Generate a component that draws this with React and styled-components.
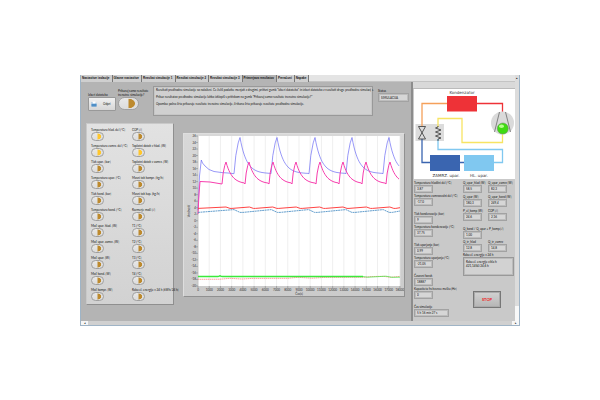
import React, { useState } from 'react'
import styled, { createGlobalStyle } from 'styled-components'

const GlobalStyle = createGlobalStyle`
* { box-sizing: border-box; }
body {
  margin: 0;
  background: #fff;
  font-family: Lato, "Liberation Sans", Arial, sans-serif;
  font-size: 3px;
  line-height: 4px;
  color: #111;
}
button, input { font: inherit; color: inherit; margin: 0; }
`

const Page = styled.div`
  padding: 75px 80px 0;
`

const Window = styled.main`
  display: grid;
  grid-template-columns: minmax(0, 1fr) 4px;
  border: 1px solid #9fb4c6;
  border-top: none;
  background: #b4b4b4;
`

const Tabs = styled.nav`
  display: flex;
  height: 7px;
  background: #e4e4e4;
  border-bottom: 1px solid #c4c4c4;
`

const Tab = styled.button`
  height: 7px;
  padding: 0 2px 0 1px;
  border: none;
  border-right: 1px solid #777;
  background: ${p => (p.$active ? '#b4b4b4' : '#cfcfcf')};
  font-family: "Liberation Sans", Arial, sans-serif;
  font-weight: bold;
  line-height: 7px;
  white-space: nowrap;
`

const Body = styled.div`
  display: grid;
  grid-template-columns: minmax(0, 1fr) 104px;
`

const Workspace = styled.section`
  padding: 4px 2px 16px 5px;
`

const TopBar = styled.div`
  display: flex;
  height: 37px;
  padding-left: 2px;
`

const FileBox = styled.div`
  display: flex;
  flex-direction: column;
  flex: none;
  width: 30px;
  padding-top: 7px;
`

const FileButton = styled.button`
  display: flex;
  align-items: center;
  gap: 6px;
  width: 28px;
  height: 14px;
  padding: 0 2px;
  border: 1px solid #999;
  border-radius: 1px;
  background: linear-gradient(#f0f0f0, #d6d6d6);
`

const CompareBox = styled.div`
  display: flex;
  flex-direction: column;
  flex: none;
  width: 35px;
  padding-top: 3px;
  white-space: nowrap;
`

const Switch = styled.input`
  appearance: none;
  display: block;
  flex: none;
  width: ${p => (p.$big ? 21 : 13)}px;
  height: ${p => (p.$big ? 13 : 9)}px;
  --lamp: #bd8a2e;
  border: 1px solid #a0a0a0;
  border-radius: 8px;
  background:
    linear-gradient(#e8e8e8, #dcdcdc) 0 0 / 50% 100% no-repeat,
    radial-gradient(ellipse 36% 46% at 50% 50%, var(--lamp) 88%, #dedede 100%);
  &:checked { --lamp: #ffc62c; }
`

const Message = styled.div`
  flex: 1;
  min-width: 0;
  height: 30px;
  padding: 1px 2px;
  border: 1px solid #999;
  outline: 1px solid #c6c6c6;
  outline-offset: -2px;
  background: #d0d0d0;
  white-space: nowrap;
  p { margin: 0 0 3px; }
`

const Status = styled.div`
  display: flex;
  flex-direction: column;
  flex: none;
  width: 31px;
  margin: 3px 0 0 5px;
`

const Panels = styled.div`
  display: flex;
  align-items: flex-start;
  gap: 9px;
  padding-right: 4px;
`

const SwitchPanel = styled.div`
  display: grid;
  grid-template-columns: 41px minmax(0, 1fr);
  row-gap: 4px;
  flex: none;
  width: 88px;
  padding: 4px 0 4px 4px;
  border: 1px solid #c9c9c9;
  border-right-color: #8f8f8f;
  border-bottom-color: #8f8f8f;
  background: linear-gradient(#e2e2e2, #d2d2d2);
  white-space: nowrap;
`

const SwitchItem = styled.div`
  display: flex;
  flex-direction: column;
  height: 12px;
`

const ChartPanel = styled.div`
  flex: 1;
  min-width: 0;
  margin-top: 10px;
  border: 1px solid #dedede;
  border-right-color: #909090;
  border-bottom-color: #909090;
  background: linear-gradient(#d8d8d8, #cbcbcb);
  svg { display: block; width: 100%; }
`

const Side = styled.aside`
  border-left: 2px solid #8c8c8c;
  background: #c9c9c9;
`

const SideHead = styled.div`
  height: 7px;
  background: #d9d9d9;
  border-bottom: 1px solid #bbb;
`

const Diagram = styled.div`
  margin-left: 1px;
  background: #fff;
  svg { display: block; width: 100%; }
`

const Readings = styled.div`
  display: grid;
  grid-template-columns: 49px minmax(0, 1fr);
  padding: 2px 0 0 1px;
  white-space: nowrap;
`

const Column = styled.div`
  display: flex;
  flex-direction: column;
  gap: 6px;
`

const Group = styled.div`
  display: flex;
  flex-direction: column;
  gap: ${p => p.$gap || 1}px;
`

const Pair = styled.div`
  display: grid;
  grid-template-columns: 25px minmax(0, 1fr);
`

const FieldBox = styled.div`
  display: flex;
  flex-direction: column;
  height: 12px;
`

const Value = styled.input`
  width: ${p => p.$width || '19px'};
  height: ${p => (p.$tall ? 9 : 8)}px;
  padding: 0 2px;
  border: 1px solid #a2a2a2;
  outline: 1px solid #bdbdbd;
  outline-offset: -2px;
  background: #d6d6d6;
`

const EnergyBox = styled.div`
  width: 51px;
  height: 19px;
  padding: 2px;
  border: 1px solid #999;
  outline: 1px solid #bbb;
  outline-offset: -2px;
  background: #d2d2d2;
  p { margin: 0; line-height: 4px; }
`

const StopButton = styled.button`
  width: 28px;
  height: 17px;
  margin: 9px 0 0 10px;
  padding: 0;
  border: 1px solid #777;
  box-shadow: inset 0 0 0 1px #aaa;
  background: linear-gradient(#d2d2d2, #b5b5b5);
  color: #f01818;
  font-size: 4px;
  font-weight: bold;
`

const VScroll = styled.div`
  display: flex;
  flex-direction: column;
  justify-content: space-between;
  background: #dcdcdc;
  line-height: 6px;
  text-align: center;
  span:last-child { height: 15px; background: #f8f8f8; }
`

const HScroll = styled.div`
  grid-column: 1 / -1;
  display: flex;
  justify-content: space-between;
  height: 4px;
  background: #d0d0d0;
  span { width: 7px; background: #f6f6f6; text-align: center; }
`

const tabs = ['Nastavitve izolacije', 'Glavne nastavitve', 'Rezultat simulacije 1', 'Rezultat simulacije 2', 'Rezultat simulacije 3', 'Primerjava rezultatov', 'Preračuni', 'Napake']

const switches = [
  ['Temperatura hlad. del [°C]', true], ['COP [/]', false],
  ['Temperatura zamrz. del [°C]', true], ['Toplotni dotok v hlad. [W]', true],
  ['Tlak upar. [bar]', false], ['Toplotni dotok v zamrz. [W]', false],
  ['Temperatura upar. [°C]', false], ['Masni tok kompr. [kg/h]', false],
  ['Tlak kond. [bar]', false], ['Masni tok kap. [kg/h]', false],
  ['Temperatura kond. [°C]', false], ['Razmerje moči [/]', false],
  ['Moč upar. hlad. [W]', false], ['T1 [°C]', false],
  ['Moč upar. zamrz. [W]', false], ['T2 [°C]', false],
  ['Moč upar. [W]', false], ['T3 [°C]', false],
  ['Moč kond. [W]', false], ['T4 [°C]', false],
  ['Moč kompr. [W]', false], ['Raba el. energije v 24 h [kWh/24 h]', false],
]

function Field({ id, label, value, width }) {
  return (
    <FieldBox>
      <label htmlFor={id}>{label}</label>
      <Value id={id} $width={width} value={value} readOnly />
    </FieldBox>
  )
}

// fast rise to a peak, then exponential decay down to the base level
function spikes(start, peaks, rise, top, base, tau) {
  let points = [...start]
  peaks.forEach((p, i) => {
    points.push([p - rise, base], [p - rise * 0.7, base - (base - top) * 0.5], [p - rise * 0.3, base - (base - top) * 0.85], [p, top])
    const end = i < peaks.length - 1 ? peaks[i + 1] - rise : 202
    for (let x = p + 1; x < end; x += 1) {
      points.push([x, base - (base - top) * Math.exp(-(x - p) / tau)])
    }
  })
  return points.map(p => p[0].toFixed(1) + ',' + p[1].toFixed(1)).join(' ')
}

function waves(first, period, low, high, drop) {
  let points = [[0, low]]
  for (let x = first; x < 206; x += period) {
    points.push([x - drop, high], [x, low], [x + drop / 2, low])
  }
  return points.filter(p => p[0] <= 202).map(p => p.join(',')).join(' ') + ' 202,' + (low + high) / 2
}

const bluePeaks = [42, 79, 117, 154, 191]
const pinkPeaks = [28, 51, 75, 98, 122, 145, 168, 192]
const blueStart = [[0, 74], [1.5, 40], [3.3, 24], [4.5, 27], [7, 30], [11, 33.5], [16, 35.5], [24, 36.6], [30, 37]]
const pinkStart = [[0, 78], [1, 58], [2, 45.5], [12, 46]]

function Chart() {
  const ys = Array.from({ length: 24 }, (_, i) => 26 - i * 2)
  const xs = Array.from({ length: 19 }, (_, i) => i * 1000)
  return (
    <svg viewBox="0 0 220 162" fontSize="3" fill="#333">
      <g transform="translate(14 2)">
        <rect width="202" height="150" fill="#fff" />
        {xs.map((v, i) => (
          <g key={v}>
            <line x1={i * 11.22} x2={i * 11.22} y1="0" y2="150" stroke="#e8e8e8" strokeWidth="0.7" />
            <line x1={i * 11.22} x2={i * 11.22} y1="150" y2="152" stroke="#666" strokeWidth="0.4" />
            <text x={i * 11.22} y="155" textAnchor="middle">{v}</text>
          </g>
        ))}
        {ys.map((v, i) => (
          <g key={v}>
            <line x1="-2" x2="0" y1={i * 6.52} y2={i * 6.52} stroke="#666" strokeWidth="0.4" />
            <text x="-2" y={i * 6.52 + 1} textAnchor="end">{v}</text>
          </g>
        ))}
        <line x1="0" x2="0" y1="0" y2="150" stroke="#888" strokeWidth="0.4" />
        <g fill="none" strokeWidth="0.7">
          <polyline stroke="#6c6cf4" points={spikes(blueStart, bluePeaks, 6, 1.5, 37.7, 6.5)} />
          <polyline stroke="#f73fae" strokeWidth="1" points={spikes(pinkStart, pinkPeaks, 4, 26, 48, 6)} />
          <polyline stroke="#f44" strokeWidth="1" points={waves(32, 23.4, 72.4, 71, 4)} />
          <polyline stroke="#3d86c0" strokeWidth="0.8" strokeDasharray="2 0.5" points={waves(42, 37.3, 76.4, 73.6, 6)} />
          <polyline stroke="#f77" strokeWidth="0.7" strokeDasharray="1.5 0.5" points="0,143.3 22,143.2 32,142.3 44,143 54,142.4 90,142.3 100,141.3 114,142.2 126,141.4 168,141.2 172,140.6 186,140.3 192,141.3 202,140.4" />
          <polyline stroke="#3bea3b" strokeWidth="1.3" points="0,140.5 20,140.5 22,139.8 24,140.5 165,140.5" />
          <polyline stroke="#3bea3b" strokeWidth="0.7" points="165,140.6 170,141.2 188,140.2 194,141.3 202,141.2" />
        </g>
        <text x="101" y="158.5" textAnchor="middle">Čas(s)</text>
        <text transform="translate(-8 75) rotate(-90)" textAnchor="middle">Vrednosti</text>
      </g>
    </svg>
  )
}

function Circuit() {
  return (
    <svg viewBox="0 0 101 90" fontFamily="DejaVu Sans, sans-serif" fontSize="4" fill="#333">
      <rect x="1.5" y="35" width="28.5" height="17" fill="#dcdcdc" />
      <g fill="none" strokeWidth="1.3">
        <path d="M33 14.5H8V37" stroke="#f5a05a" />
        <path d="M63 14.5H88.500V24" stroke="#ee3237" />
        <path d="M24 38V29.500H48V53.500H88.500V44" stroke="#f7e463" />
        <path d="M24 50V60.500H88.500V73.500H80" stroke="#80c8f0" />
        <path d="M8 50V73.500H17M46 73.500H50" stroke="#3a65b0" />
      </g>
      <rect x="33" y="7" width="30" height="15.5" fill="#ee3237" />
      <rect x="16" y="66" width="30" height="16" fill="#3a65b0" />
      <rect x="50" y="66" width="30" height="16" fill="#80c8f0" />
      <g fill="none" stroke="#333" strokeWidth="0.8">
        <path d="M4.500 37.500H11.500L4.500 50H11.500Z" />
        <path d="M24 37v1l-2.500 1 5.500 2-5.500 2 5.500 2-5.500 2 5.500 2-3 1v2" />
      </g>
      <circle cx="88.5" cy="34" r="11.5" fill="#dadada" />
      <path d="M85.500 23L80.500 43M91.500 23L96.500 43" stroke="#444" strokeWidth="0.6" />
      <circle cx="88.8" cy="39.500" r="5.500" fill="#3edb12" stroke="#6b8a60" strokeWidth="0.5" />
      <ellipse cx="87.500" cy="37.200" rx="2.500" ry="1.700" fill="#b4ff8c" />
      <text x="48" y="5" textAnchor="middle">Kondenzator</text>
      <text x="32" y="87.500" textAnchor="middle">ZAMRZ. upar.</text>
      <text x="65" y="87.500" textAnchor="middle">HL. upar.</text>
    </svg>
  )
}

function App() {
  const [active, setActive] = useState(5)

  return (
    <>
      <GlobalStyle />
      <Page>
        <Window>
          <div>
            <Tabs>
              {tabs.map((t, i) => (
                <Tab key={t} $active={i === active} onClick={() => setActive(i)}>{t}</Tab>
              ))}
            </Tabs>
            <Body>
              <Workspace>
                <TopBar>
                  <FileBox>
                    <label htmlFor="file">Izberi datoteko</label>
                    <FileButton id="file">
                      <svg width="6" height="6" viewBox="0 0 6 6">
                        <path d="M0.500 1h2l0.600 0.800h2.400v3.700h-5z" fill="#8db9df" />
                        <path d="M1.500 0.500h3v2h-3z" fill="#fff" />
                        <path d="M0.500 3h5v2.500h-5z" fill="#4f8fc6" />
                      </svg>
                      Odpri
                    </FileButton>
                  </FileBox>
                  <CompareBox>
                    <label htmlFor="compare">Prikazuj samo rezultate<br />trenutne simulacije?</label>
                    <Switch id="compare" type="checkbox" $big />
                  </CompareBox>
                  <Message>
                    <p>Rezultati predhodne simulacije so naloženi. Če želiš podatke menjati z drugimi, pritisni gumb "Izberi datoteko" in izberi datoteko z rezultati druge predhodne simulacije.</p>
                    <p>Prikaz rezultatov predhodne simulacije lahko izklopiš s pritiskom na gumb "Prikazuj samo rezultate trenutne simulacije?"</p>
                    <p>Opomba: polna črta prikazuje rezultate trenutne simulacije, črtkana črta prikazuje rezultate predhodne simulacije.</p>
                  </Message>
                  <Status>
                    <label htmlFor="status">Status</label>
                    <Value id="status" $width="100%" $tall value="SIMULACIJA" readOnly />
                  </Status>
                </TopBar>
                <Panels>
                  <SwitchPanel>
                    {switches.map(([name, on], i) => (
                      <SwitchItem key={name}>
                        <label htmlFor={'sw' + i}>{name}</label>
                        <Switch id={'sw' + i} type="checkbox" defaultChecked={on} />
                      </SwitchItem>
                    ))}
                  </SwitchPanel>
                  <ChartPanel>
                    <Chart />
                  </ChartPanel>
                </Panels>
              </Workspace>
              <Side>
                <SideHead />
                <Diagram>
                  <Circuit />
                </Diagram>
                <Readings>
                  <Column>
                    <Group>
                      <Field id="t1" label="Temperatura hladilni del [°C]" value="3,87" />
                      <Field id="t2" label="Temperatura zamrzovalni del [°C]" value="-17,0" />
                    </Group>
                    <Group>
                      <Field id="p1" label="Tlak kondenzacije [bar]" value="9" />
                      <Field id="t3" label="Temperatura kondenzacije [°C]" value="37,75" />
                    </Group>
                    <Group>
                      <Field id="p2" label="Tlak uparjanja [bar]" value="0,99" />
                      <Field id="t4" label="Temperatura uparjanja [°C]" value="-21,05" />
                    </Group>
                    <Group>
                      <Field id="step" label="Časovni korak" value="18887" />
                      <Field id="freq" label="Kapaciteta frekvence mešta [Hz]" value="0" />
                    </Group>
                    <Field id="time" label="Čas simulacije" value="5 h 16 min 27 s" width="35px" />
                  </Column>
                  <Column>
                    <Group $gap={2}>
                      <Pair>
                        <Field id="q1" label="Q_upar_hlad [W]" value="58,5" />
                        <Field id="q2" label="Q_upar_zamrz [W]" value="82,3" />
                      </Pair>
                      <Pair>
                        <Field id="q3" label="Q_upar [W]" value="180,3" />
                        <Field id="q4" label="Q_upar_kond [W]" value="249,4" />
                      </Pair>
                      <Pair>
                        <Field id="pk" label="P_el_komp [W]" value="24,6" />
                        <Field id="cop" label="COP [/]" value="2,16" />
                      </Pair>
                    </Group>
                    <Group>
                      <Field id="qk" label="Q_kond / Q_upar + P_komp [/]" value="1,00" />
                      <Pair>
                        <Field id="qh" label="Q_tr_hlad" value="12,8" />
                        <Field id="qz" label="Q_tr_zamrz" value="14,8" />
                      </Pair>
                      <div>
                        <div>Raba el. energije v 24 h</div>
                        <EnergyBox>
                          <p>Raba el. energije cikla h</p>
                          <p>421,1454/24,6 h</p>
                        </EnergyBox>
                      </div>
                    </Group>
                    <StopButton>STOP</StopButton>
                  </Column>
                </Readings>
              </Side>
            </Body>
          </div>
          <VScroll><span>▴</span><span /></VScroll>
          <HScroll><span>◂</span><span>▸</span></HScroll>
        </Window>
      </Page>
    </>
  )
}

export default App
